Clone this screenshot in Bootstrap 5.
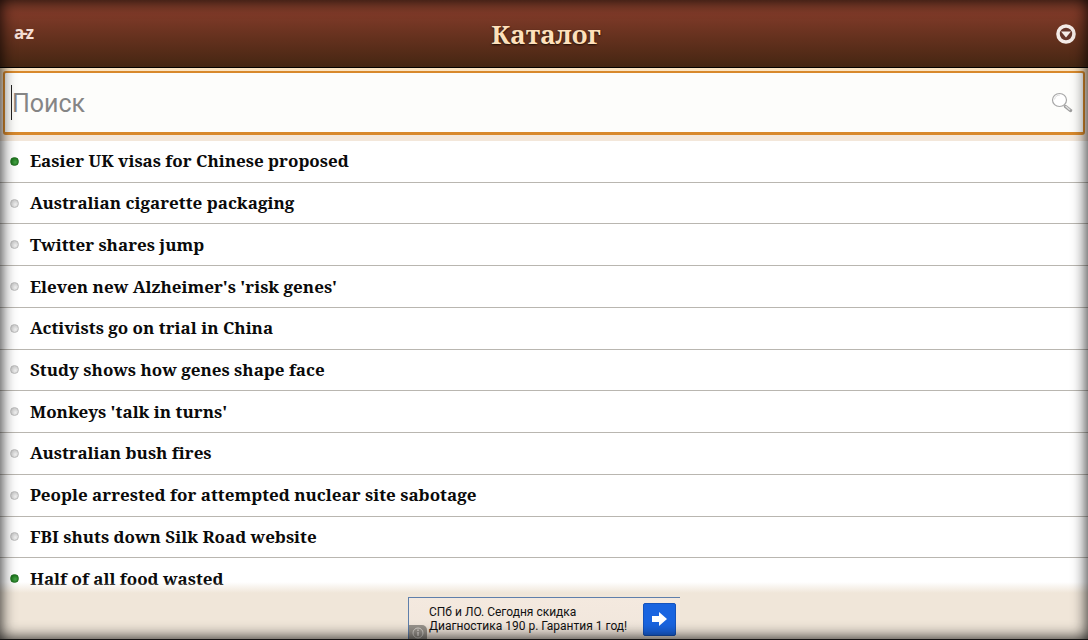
<!DOCTYPE html>
<html lang="ru">
<head>
<meta charset="utf-8">
<meta name="viewport" content="width=device-width, initial-scale=1">
<title>Каталог</title>
<link href="https://cdn.jsdelivr.net/npm/bootstrap@5.3.0/dist/css/bootstrap.min.css" rel="stylesheet">
<style>
  body { background: #f0e6d9; font-family: Roboto, "Liberation Sans", sans-serif; }
  .serif { font-family: "Noto Serif", "Droid Serif", "DejaVu Serif Condensed", "DejaVu Serif", serif; font-weight: 700; font-variant-ligatures: none; }

  /* top bar */
  .topbar { height: 68px; background: linear-gradient(#84402c, #7f3a28 20%, #452612); border-bottom: 1px solid #050200; }
  .topbar h1 { font-size: 26px; line-height: 32px; color: #fde0bb; text-shadow: 0 1px 2px #1c0a04; }
  .plain { border: 0; background: none; padding: 0; }
  .sort { font: 700 17px/24px "Open Sans", "Noto Sans", sans-serif; color: #f4ded5; padding: 0 0 2px 2px; }
  .sort .dash { margin: 0 -2px; }
  .more { width: 22px; height: 22px; }

  /* search field */
  .search-wrap { padding: 3px 3px 6px; background: linear-gradient(#fbe3c0, #f3e7da 40%); }
  .search-box { height: 64px; background: #fdfdfb; border: 2px solid #d8892c; border-bottom-width: 3px; border-radius: 3px; }
  .search-box input { font-size: 25px; line-height: 32px; height: 48px; border: 0; outline: 0; background: transparent; color: #333; min-width: 0; padding: 2px 0 0; }
  .search-box input::placeholder { color: #858585; opacity: 1; }
  .search-box .field { padding: 0 9px 0 6px; }
  .caret { width: 1px; height: 35px; background: #222; }

  /* article list */
  .articles { display: grid; grid-auto-rows: minmax(34px, 1fr); background: #fff; min-height: 0; }
  .articles li { gap: 11px; padding: 0 10px; border-bottom: 1px solid #b9b6b0; min-width: 0; }
  .articles a { font-size: 17px; line-height: 24px; color: #0a0a0a; text-decoration: none; }
  .dot { width: 9px; height: 9px; border-radius: 50%; background: radial-gradient(circle at 60% 65%, #f2f2f2, #cfcfcf 70%); border: 1px solid #bdbdbd; }
  .dot.unread { background: radial-gradient(circle at 60% 60%, #47a347, #187318 75%); border-color: #237023; }

  /* banner */
  .foot { height: 60px; margin-top: -20px; background: linear-gradient(rgba(240,230,217,0) 2px, #f0e6d9 13px); z-index: 1; }
  .advert { width: 272px; height: 43px; background: linear-gradient(#f4e9df, #f0e6db); border: solid #5f7fab; border-width: 1px 0 0 1px; color: #111; text-decoration: none; font-size: 12px; line-height: 14px; }
  .advert .copy { padding-left: 20px; white-space: nowrap; }
  .go { width: 33px; height: 33px; background: #1964e0; border: 1px solid #1553bd; border-radius: 2px; }
  .info { width: 18px; height: 15px; left: 0; bottom: 0; background: #98938c; border-radius: 0 5px 0 0; }

  /* darkened screen edges */
  .vignette { z-index: 5; pointer-events: none; border-bottom: 1px solid #161413; box-shadow: inset 0 0 16px rgba(0,0,0,.95); }
</style>
</head>
<body class="vh-100 d-flex flex-column overflow-hidden">
<header class="topbar d-flex align-items-center justify-content-between flex-shrink-0 ps-2 pe-1">
  <button class="plain sort ms-1" aria-label="Сортировка a-z">a<span class="dash">-</span>z</button>
  <h1 class="serif m-0 ps-1">Каталог</h1>
  <button class="plain more d-flex me-2" aria-label="Меню">
    <svg width="22" height="22" viewBox="0 0 22 22" aria-hidden="true">
      <circle cx="12" cy="11" r="8" fill="#65352a" stroke="#f4ebe7" stroke-width="3.600"/>
      <path d="M7 8.500H17L12 14.500Z" fill="#f4ebe7"/>
    </svg>
  </button>
</header>

<form class="search-wrap flex-shrink-0" role="search" onsubmit="return false">
  <div class="search-box">
    <div class="field h-100 d-flex align-items-center">
      <span class="caret flex-shrink-0"></span>
      <input class="flex-grow-1" id="q" type="text" placeholder="Поиск" aria-label="Поиск">
      <button class="plain d-flex" aria-label="Найти">
        <svg width="24" height="24" viewBox="0 0 24 24" fill="none" aria-hidden="true">
          <ellipse cx="9.500" cy="9" rx="7" ry="6.500" fill="#fff" stroke="#a7a7a7" stroke-width="1.200"/>
          <path d="M4.500 8.500Q5.500 4 10 4" stroke="#ddd"/>
          <path d="M15.500 15.500L20.500 19.500" stroke="#9d9d9d" stroke-width="3.500" stroke-linecap="round"/>
          <path d="M15.500 15L20 19" stroke="#dedede" stroke-width="1.500"/>
        </svg>
      </button>
    </div>
  </div>
</form>

<ul class="articles list-unstyled m-0 flex-grow-1">
  <li class="d-flex align-items-center"><span class="dot unread"></span><a class="serif" href="#">Easier UK visas for Chinese proposed</a></li>
  <li class="d-flex align-items-center"><span class="dot"></span><a class="serif" href="#">Australian cigarette packaging</a></li>
  <li class="d-flex align-items-center"><span class="dot"></span><a class="serif" href="#">Twitter shares jump</a></li>
  <li class="d-flex align-items-center"><span class="dot"></span><a class="serif" href="#">Eleven new Alzheimer's 'risk genes'</a></li>
  <li class="d-flex align-items-center"><span class="dot"></span><a class="serif" href="#">Activists go on trial in China</a></li>
  <li class="d-flex align-items-center"><span class="dot"></span><a class="serif" href="#">Study shows how genes shape face</a></li>
  <li class="d-flex align-items-center"><span class="dot"></span><a class="serif" href="#">Monkeys 'talk in turns'</a></li>
  <li class="d-flex align-items-center"><span class="dot"></span><a class="serif" href="#">Australian bush fires</a></li>
  <li class="d-flex align-items-center"><span class="dot"></span><a class="serif" href="#">People arrested for attempted nuclear site sabotage</a></li>
  <li class="d-flex align-items-center"><span class="dot"></span><a class="serif" href="#">FBI shuts down Silk Road website</a></li>
  <li class="d-flex align-items-center"><span class="dot unread"></span><a class="serif" href="#">Half of all food wasted</a></li>
</ul>

<footer class="foot position-relative flex-shrink-0 d-flex justify-content-center align-items-end">
  <a class="advert d-flex align-items-center justify-content-between position-relative" href="#">
    <span class="copy">СПб и ЛО. Сегодня скидка<br>Диагностика 190 р. Гарантия 1 год!</span>
    <span class="go d-flex align-items-center justify-content-center me-1">
      <svg width="17" height="16" viewBox="0 0 17 16" aria-hidden="true"><path d="M1 5H8V1L16 8L8 15V11H1Z" fill="#fff"/></svg>
    </span>
    <span class="info position-absolute d-flex align-items-center justify-content-center">
      <svg width="12" height="12" viewBox="0 0 12 12" fill="none" stroke="#d9d5cf" aria-hidden="true"><circle cx="6" cy="6" r="5"/><path d="M6 5V9M6 2.500V4" stroke-width="1.500"/></svg>
    </span>
  </a>
</footer>
<div class="vignette position-fixed top-0 start-0 w-100 h-100"></div>
<script src="https://cdn.jsdelivr.net/npm/bootstrap@5.3.0/dist/js/bootstrap.bundle.min.js"></script>
</body>
</html>
